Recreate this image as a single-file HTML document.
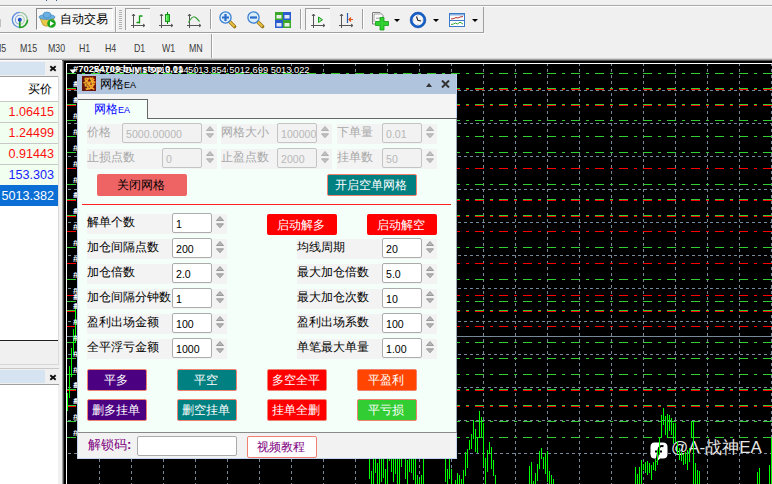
<!DOCTYPE html><html><head><meta charset="utf-8"><style>
*{margin:0;padding:0;box-sizing:content-box}
html,body{width:772px;height:484px;overflow:hidden;background:#f0f0f0;position:relative;font-family:"Liberation Sans",sans-serif}
.abs{position:absolute;white-space:nowrap}
.ct{font-size:11px;color:#fff;line-height:11px}
.ct3{font-size:9.5px;color:#fff;line-height:9px;font-weight:bold}
.ct2{font-size:9px;color:#fff;line-height:9px}
.tf{font-size:10.5px;color:#3c3c3c;line-height:12px;transform:scaleX(0.84);transform-origin:0 0}
.tb{font-size:12px;font-weight:500;color:#000;line-height:12px}
.mw{font-size:12px;line-height:14px}
.mwn{font-size:12.6px;line-height:14px}
.fa{font-size:13px;font-weight:bold;color:#f6b030;width:14px;text-align:center;line-height:15px}
.ttl{font-size:12px;color:#000;line-height:14px}
.tab{font-size:12px;color:#0000ff;line-height:14px}
.ea{font-size:9px}
.lbl{font-size:12px;line-height:16px}
.val{font-size:10px;line-height:12px;transform:scaleX(1.06);transform-origin:0 0}
.bt{font-size:12px}
.wm{font-size:17px;font-weight:500;color:#e6e6e6;line-height:18px;text-shadow:0 0 1px #000}
.wmi{display:inline-block;width:19px;height:19px;background:#fff;border-radius:5px;vertical-align:-3px;margin-right:4px}
</style></head><body><svg class="abs" style="left:0;top:0" width="772" height="484"><rect x="64" y="61" width="708" height="423" fill="#000"/><rect x="66" y="63" width="706" height="1" fill="#fff"/><rect x="66" y="63" width="1" height="421" fill="#fff"/><line x1="99.5" y1="64" x2="99.5" y2="484" stroke="#778899" stroke-width="1" stroke-dasharray="3 3" stroke-dashoffset="1"/><line x1="131.5" y1="64" x2="131.5" y2="484" stroke="#778899" stroke-width="1" stroke-dasharray="3 3" stroke-dashoffset="1"/><line x1="163.5" y1="64" x2="163.5" y2="484" stroke="#778899" stroke-width="1" stroke-dasharray="3 3" stroke-dashoffset="1"/><line x1="195.5" y1="64" x2="195.5" y2="484" stroke="#778899" stroke-width="1" stroke-dasharray="3 3" stroke-dashoffset="1"/><line x1="227.5" y1="64" x2="227.5" y2="484" stroke="#778899" stroke-width="1" stroke-dasharray="3 3" stroke-dashoffset="1"/><line x1="259.5" y1="64" x2="259.5" y2="484" stroke="#778899" stroke-width="1" stroke-dasharray="3 3" stroke-dashoffset="1"/><line x1="291.5" y1="64" x2="291.5" y2="484" stroke="#778899" stroke-width="1" stroke-dasharray="3 3" stroke-dashoffset="1"/><line x1="323.5" y1="64" x2="323.5" y2="484" stroke="#778899" stroke-width="1" stroke-dasharray="3 3" stroke-dashoffset="1"/><line x1="355.5" y1="64" x2="355.5" y2="484" stroke="#778899" stroke-width="1" stroke-dasharray="3 3" stroke-dashoffset="1"/><line x1="387.5" y1="64" x2="387.5" y2="484" stroke="#778899" stroke-width="1" stroke-dasharray="3 3" stroke-dashoffset="1"/><line x1="419.5" y1="64" x2="419.5" y2="484" stroke="#778899" stroke-width="1" stroke-dasharray="3 3" stroke-dashoffset="1"/><line x1="451.5" y1="64" x2="451.5" y2="484" stroke="#778899" stroke-width="1" stroke-dasharray="3 3" stroke-dashoffset="1"/><line x1="483.5" y1="64" x2="483.5" y2="484" stroke="#778899" stroke-width="1" stroke-dasharray="3 3" stroke-dashoffset="1"/><line x1="515.5" y1="64" x2="515.5" y2="484" stroke="#778899" stroke-width="1" stroke-dasharray="3 3" stroke-dashoffset="1"/><line x1="547.5" y1="64" x2="547.5" y2="484" stroke="#778899" stroke-width="1" stroke-dasharray="3 3" stroke-dashoffset="1"/><line x1="579.5" y1="64" x2="579.5" y2="484" stroke="#778899" stroke-width="1" stroke-dasharray="3 3" stroke-dashoffset="1"/><line x1="611.5" y1="64" x2="611.5" y2="484" stroke="#778899" stroke-width="1" stroke-dasharray="3 3" stroke-dashoffset="1"/><line x1="643.5" y1="64" x2="643.5" y2="484" stroke="#778899" stroke-width="1" stroke-dasharray="3 3" stroke-dashoffset="1"/><line x1="675.5" y1="64" x2="675.5" y2="484" stroke="#778899" stroke-width="1" stroke-dasharray="3 3" stroke-dashoffset="1"/><line x1="707.5" y1="64" x2="707.5" y2="484" stroke="#778899" stroke-width="1" stroke-dasharray="3 3" stroke-dashoffset="1"/><line x1="739.5" y1="64" x2="739.5" y2="484" stroke="#778899" stroke-width="1" stroke-dasharray="3 3" stroke-dashoffset="1"/><line x1="771.5" y1="64" x2="771.5" y2="484" stroke="#778899" stroke-width="1" stroke-dasharray="3 3" stroke-dashoffset="1"/><line x1="67" y1="90.5" x2="772" y2="90.5" stroke="#778899" stroke-width="1" stroke-dasharray="3 3" stroke-dashoffset="5"/><line x1="67" y1="123.5" x2="772" y2="123.5" stroke="#778899" stroke-width="1" stroke-dasharray="3 3" stroke-dashoffset="5"/><line x1="67" y1="156.5" x2="772" y2="156.5" stroke="#778899" stroke-width="1" stroke-dasharray="3 3" stroke-dashoffset="5"/><line x1="67" y1="189.5" x2="772" y2="189.5" stroke="#778899" stroke-width="1" stroke-dasharray="3 3" stroke-dashoffset="5"/><line x1="67" y1="222.5" x2="772" y2="222.5" stroke="#778899" stroke-width="1" stroke-dasharray="3 3" stroke-dashoffset="5"/><line x1="67" y1="255.5" x2="772" y2="255.5" stroke="#778899" stroke-width="1" stroke-dasharray="3 3" stroke-dashoffset="5"/><line x1="67" y1="288.5" x2="772" y2="288.5" stroke="#778899" stroke-width="1" stroke-dasharray="3 3" stroke-dashoffset="5"/><line x1="67" y1="321.5" x2="772" y2="321.5" stroke="#778899" stroke-width="1" stroke-dasharray="3 3" stroke-dashoffset="5"/><line x1="67" y1="354.5" x2="772" y2="354.5" stroke="#778899" stroke-width="1" stroke-dasharray="3 3" stroke-dashoffset="5"/><line x1="67" y1="387.5" x2="772" y2="387.5" stroke="#778899" stroke-width="1" stroke-dasharray="3 3" stroke-dashoffset="5"/><line x1="67" y1="420.5" x2="772" y2="420.5" stroke="#778899" stroke-width="1" stroke-dasharray="3 3" stroke-dashoffset="5"/><line x1="67" y1="453.5" x2="772" y2="453.5" stroke="#778899" stroke-width="1" stroke-dasharray="3 3" stroke-dashoffset="5"/><line x1="67" y1="73.5" x2="772" y2="73.5" stroke="#32cd32" stroke-width="1" stroke-dasharray="9 6 3 6"/><line x1="67" y1="88.5" x2="772" y2="88.5" stroke="#32cd32" stroke-width="1" stroke-dasharray="9 6 3 6"/><line x1="67" y1="89.5" x2="772" y2="89.5" stroke="#ff0000" stroke-width="1" stroke-dasharray="9 6 3 6"/><line x1="67" y1="104.5" x2="772" y2="104.5" stroke="#32cd32" stroke-width="1" stroke-dasharray="9 6 3 6"/><line x1="67" y1="105.5" x2="772" y2="105.5" stroke="#ff0000" stroke-width="1" stroke-dasharray="9 6 3 6"/><line x1="67" y1="120.5" x2="772" y2="120.5" stroke="#32cd32" stroke-width="1" stroke-dasharray="9 6 3 6"/><line x1="67" y1="136.5" x2="772" y2="136.5" stroke="#32cd32" stroke-width="1" stroke-dasharray="9 6 3 6"/><line x1="67" y1="152.5" x2="772" y2="152.5" stroke="#32cd32" stroke-width="1" stroke-dasharray="9 6 3 6"/><line x1="67" y1="168.5" x2="772" y2="168.5" stroke="#ff0000" stroke-width="1" stroke-dasharray="9 6 3 6"/><line x1="67" y1="184.5" x2="772" y2="184.5" stroke="#32cd32" stroke-width="1" stroke-dasharray="9 6 3 6"/><line x1="67" y1="199.5" x2="772" y2="199.5" stroke="#32cd32" stroke-width="1" stroke-dasharray="9 6 3 6"/><line x1="67" y1="200.5" x2="772" y2="200.5" stroke="#ff0000" stroke-width="1" stroke-dasharray="9 6 3 6"/><line x1="67" y1="215.5" x2="772" y2="215.5" stroke="#32cd32" stroke-width="1" stroke-dasharray="9 6 3 6"/><line x1="67" y1="216.5" x2="772" y2="216.5" stroke="#ff0000" stroke-width="1" stroke-dasharray="9 6 3 6"/><line x1="67" y1="231.5" x2="772" y2="231.5" stroke="#ff0000" stroke-width="1" stroke-dasharray="9 6 3 6"/><line x1="67" y1="247.5" x2="772" y2="247.5" stroke="#32cd32" stroke-width="1" stroke-dasharray="9 6 3 6"/><line x1="67" y1="263.5" x2="772" y2="263.5" stroke="#ff0000" stroke-width="1" stroke-dasharray="9 6 3 6"/><line x1="67" y1="279.5" x2="772" y2="279.5" stroke="#32cd32" stroke-width="1" stroke-dasharray="9 6 3 6"/><line x1="67" y1="295.5" x2="772" y2="295.5" stroke="#ff0000" stroke-width="1" stroke-dasharray="9 6 3 6"/><line x1="67" y1="301.5" x2="772" y2="301.5" stroke="#32cd32" stroke-width="1" stroke-dasharray="9 6 3 6"/><line x1="67" y1="310.5" x2="772" y2="310.5" stroke="#32cd32" stroke-width="1" stroke-dasharray="9 6 3 6"/><line x1="67" y1="311.5" x2="772" y2="311.5" stroke="#ff0000" stroke-width="1" stroke-dasharray="9 6 3 6"/><line x1="67" y1="326.5" x2="772" y2="326.5" stroke="#ff0000" stroke-width="1" stroke-dasharray="9 6 3 6"/><line x1="67" y1="342.5" x2="772" y2="342.5" stroke="#32cd32" stroke-width="1" stroke-dasharray="9 6 3 6"/><line x1="67" y1="358.5" x2="772" y2="358.5" stroke="#32cd32" stroke-width="1" stroke-dasharray="9 6 3 6"/><line x1="67" y1="374.5" x2="772" y2="374.5" stroke="#32cd32" stroke-width="1" stroke-dasharray="9 6 3 6"/><line x1="67" y1="389.5" x2="772" y2="389.5" stroke="#32cd32" stroke-width="1" stroke-dasharray="9 6 3 6"/><line x1="67" y1="390.5" x2="772" y2="390.5" stroke="#ff0000" stroke-width="1" stroke-dasharray="9 6 3 6"/><line x1="67" y1="405.5" x2="772" y2="405.5" stroke="#32cd32" stroke-width="1" stroke-dasharray="9 6 3 6"/><line x1="67" y1="406.5" x2="772" y2="406.5" stroke="#ff0000" stroke-width="1" stroke-dasharray="9 6 3 6"/><line x1="67" y1="421.5" x2="772" y2="421.5" stroke="#32cd32" stroke-width="1" stroke-dasharray="9 6 3 6"/><line x1="67" y1="437.5" x2="772" y2="437.5" stroke="#32cd32" stroke-width="1" stroke-dasharray="9 6 3 6"/><rect x="67" y="336" width="705" height="1" fill="#778899"/><polygon points="69.5,69.5 76.5,69.5 73,73.8" fill="#fff"/></svg>
<svg class="abs" style="left:650px;top:442px" width="19" height="21" viewBox="0 0 19 21">
<path d="M4.5 0.5 H13 Q17.5 0.5 17.5 5 V12 Q17.5 16.5 13 16.5 H10 L6.5 20 L6.5 16.5 H4.5 Q0.5 16.5 0.5 12 V5 Q0.5 0.5 4.5 0.5 Z" fill="#fff"/>
<path d="M13.5 4.3 Q10 3.3 9 6 L6.5 19 M5 9.5 H12" stroke="#000" stroke-width="2.1" fill="none"/></svg>
<div class="abs wm" style="left:671px;top:439px">@A-战神EA</div>
<svg class="abs" style="left:0;top:0" width="772" height="484"><rect x="67" y="393" width="1" height="18" fill="#00ff00"/><rect x="69" y="366" width="1" height="32" fill="#00ff00"/><rect x="71" y="348" width="1" height="29" fill="#00ff00"/><rect x="73" y="329" width="1" height="26" fill="#00ff00"/><rect x="75" y="307" width="1" height="36" fill="#00ff00"/><rect x="369" y="458" width="1" height="21" fill="#00ff00"/><rect x="371" y="471" width="1" height="13" fill="#00ff00"/><rect x="373" y="458" width="1" height="26" fill="#00ff00"/><rect x="375" y="458" width="1" height="15" fill="#00ff00"/><rect x="377" y="463" width="1" height="21" fill="#00ff00"/><rect x="379" y="458" width="1" height="26" fill="#00ff00"/><rect x="381" y="458" width="1" height="24" fill="#00ff00"/><rect x="383" y="458" width="1" height="20" fill="#00ff00"/><rect x="385" y="469" width="1" height="15" fill="#00ff00"/><rect x="387" y="458" width="1" height="26" fill="#00ff00"/><rect x="389" y="458" width="1" height="3" fill="#00ff00"/><rect x="391" y="458" width="1" height="14" fill="#00ff00"/><rect x="393" y="458" width="1" height="24" fill="#00ff00"/><rect x="395" y="458" width="1" height="16" fill="#00ff00"/><rect x="397" y="458" width="1" height="26" fill="#00ff00"/><rect x="399" y="458" width="1" height="26" fill="#00ff00"/><rect x="401" y="458" width="1" height="9" fill="#00ff00"/><rect x="405" y="458" width="1" height="21" fill="#00ff00"/><rect x="407" y="460" width="1" height="24" fill="#00ff00"/><rect x="409" y="458" width="1" height="14" fill="#00ff00"/><rect x="411" y="458" width="1" height="15" fill="#00ff00"/><rect x="413" y="458" width="1" height="22" fill="#00ff00"/><rect x="415" y="458" width="1" height="26" fill="#00ff00"/><rect x="417" y="475" width="1" height="9" fill="#00ff00"/><rect x="419" y="479" width="1" height="5" fill="#00ff00"/><rect x="421" y="475" width="1" height="9" fill="#00ff00"/><rect x="423" y="458" width="1" height="26" fill="#00ff00"/><rect x="445" y="458" width="1" height="24" fill="#00ff00"/><rect x="447" y="469" width="1" height="15" fill="#00ff00"/><rect x="449" y="458" width="1" height="21" fill="#00ff00"/><rect x="451" y="469" width="1" height="15" fill="#00ff00"/><rect x="455" y="480" width="1" height="4" fill="#00ff00"/><rect x="457" y="473" width="1" height="11" fill="#00ff00"/><rect x="459" y="475" width="1" height="9" fill="#00ff00"/><rect x="461" y="479" width="1" height="5" fill="#00ff00"/><rect x="463" y="470" width="1" height="14" fill="#00ff00"/><rect x="465" y="452" width="1" height="24" fill="#00ff00"/><rect x="467" y="449" width="1" height="19" fill="#00ff00"/><rect x="469" y="440" width="1" height="10" fill="#00ff00"/><rect x="471" y="434" width="1" height="15" fill="#00ff00"/><rect x="473" y="420" width="1" height="19" fill="#00ff00"/><rect x="475" y="429" width="1" height="23" fill="#00ff00"/><rect x="477" y="437" width="1" height="16" fill="#00ff00"/><rect x="479" y="411" width="1" height="27" fill="#00ff00"/><rect x="481" y="417" width="1" height="20" fill="#00ff00"/><rect x="483" y="423" width="1" height="44" fill="#00ff00"/><rect x="485" y="458" width="1" height="26" fill="#00ff00"/><rect x="487" y="450" width="1" height="22" fill="#00ff00"/><rect x="489" y="442" width="1" height="12" fill="#00ff00"/><rect x="491" y="447" width="1" height="22" fill="#00ff00"/><rect x="493" y="460" width="1" height="16" fill="#00ff00"/><rect x="495" y="475" width="1" height="9" fill="#00ff00"/><rect x="529" y="466" width="1" height="18" fill="#00ff00"/><rect x="531" y="462" width="1" height="22" fill="#00ff00"/><rect x="533" y="481" width="1" height="3" fill="#00ff00"/><rect x="535" y="473" width="1" height="11" fill="#00ff00"/><rect x="537" y="464" width="1" height="17" fill="#00ff00"/><rect x="539" y="451" width="1" height="18" fill="#00ff00"/><rect x="541" y="448" width="1" height="11" fill="#00ff00"/><rect x="543" y="457" width="1" height="12" fill="#00ff00"/><rect x="545" y="453" width="1" height="21" fill="#00ff00"/><rect x="547" y="451" width="1" height="31" fill="#00ff00"/><rect x="549" y="471" width="1" height="13" fill="#00ff00"/><rect x="551" y="475" width="1" height="9" fill="#00ff00"/><rect x="553" y="479" width="1" height="5" fill="#00ff00"/><rect x="635" y="467" width="1" height="17" fill="#00ff00"/><rect x="637" y="474" width="1" height="10" fill="#00ff00"/><rect x="639" y="467" width="1" height="17" fill="#00ff00"/><rect x="641" y="460" width="1" height="24" fill="#00ff00"/><rect x="643" y="464" width="1" height="6" fill="#00ff00"/><rect x="645" y="462" width="1" height="11" fill="#00ff00"/><rect x="647" y="461" width="1" height="14" fill="#00ff00"/><rect x="649" y="463" width="1" height="10" fill="#00ff00"/><rect x="651" y="465" width="1" height="15" fill="#00ff00"/><rect x="653" y="462" width="1" height="8" fill="#00ff00"/><rect x="655" y="459" width="1" height="12" fill="#00ff00"/><rect x="657" y="450" width="1" height="15" fill="#00ff00"/><rect x="659" y="438" width="1" height="17" fill="#00ff00"/><rect x="661" y="415" width="1" height="23" fill="#00ff00"/><rect x="663" y="408" width="1" height="17" fill="#00ff00"/><rect x="665" y="416" width="1" height="19" fill="#00ff00"/><rect x="667" y="414" width="1" height="24" fill="#00ff00"/><rect x="669" y="415" width="1" height="16" fill="#00ff00"/><rect x="671" y="418" width="1" height="17" fill="#00ff00"/><rect x="673" y="423" width="1" height="21" fill="#00ff00"/><rect x="675" y="423" width="1" height="19" fill="#00ff00"/><rect x="677" y="441" width="1" height="13" fill="#00ff00"/><rect x="679" y="448" width="1" height="12" fill="#00ff00"/><rect x="681" y="452" width="1" height="9" fill="#00ff00"/><rect x="683" y="454" width="1" height="11" fill="#00ff00"/><rect x="685" y="452" width="1" height="12" fill="#00ff00"/><rect x="687" y="450" width="1" height="20" fill="#00ff00"/><rect x="689" y="448" width="1" height="14" fill="#00ff00"/><rect x="691" y="421" width="1" height="17" fill="#00ff00"/><rect x="693" y="421" width="1" height="63" fill="#00ff00"/><rect x="695" y="463" width="1" height="21" fill="#00ff00"/><rect x="697" y="470" width="1" height="14" fill="#00ff00"/><rect x="699" y="471" width="1" height="13" fill="#00ff00"/><rect x="757" y="472" width="1" height="12" fill="#00ff00"/><rect x="759" y="468" width="1" height="16" fill="#00ff00"/><rect x="769" y="465" width="1" height="19" fill="#00ff00"/><rect x="771" y="438" width="1" height="46" fill="#00ff00"/></svg>
<div class="abs ct" style="left:73px;top:63px;font-size:9.6px;font-weight:bold;transform:scaleX(0.985);transform-origin:0 0">#70254709 buy stop 0.01</div>
<div class="abs ct2" style="left:93px;top:66px;font-size:9.3px">XAUUSD,M1 5013.194</div>
<div class="abs ct2" style="left:188px;top:66px;font-size:9.3px">5013.854 5012.699 5013.022</div>
<div class="abs ct3" style="left:73px;top:79px">#7</div>
<div class="abs ct3" style="left:74px;top:79px">#7</div>
<div class="abs ct3" style="left:73px;top:95px">#7</div>
<div class="abs ct3" style="left:74px;top:95px">#7</div>
<div class="abs ct3" style="left:73px;top:111px">#7</div>
<div class="abs ct3" style="left:73px;top:127px">#7</div>
<div class="abs ct3" style="left:73px;top:143px">#7</div>
<div class="abs ct3" style="left:73px;top:159px">#7</div>
<div class="abs ct3" style="left:73px;top:175px">#7</div>
<div class="abs ct3" style="left:73px;top:190px">#7</div>
<div class="abs ct3" style="left:74px;top:190px">#7</div>
<div class="abs ct3" style="left:73px;top:206px">#7</div>
<div class="abs ct3" style="left:74px;top:206px">#7</div>
<div class="abs ct3" style="left:73px;top:222px">#7</div>
<div class="abs ct3" style="left:73px;top:238px">#7</div>
<div class="abs ct3" style="left:73px;top:254px">#7</div>
<div class="abs ct3" style="left:73px;top:270px">#7</div>
<div class="abs ct3" style="left:73px;top:286px">#7</div>
<div class="abs ct3" style="left:73px;top:292px">#7</div>
<div class="abs ct3" style="left:74px;top:292px">#7</div>
<div class="abs ct3" style="left:73px;top:301px">#7</div>
<div class="abs ct3" style="left:74px;top:301px">#7</div>
<div class="abs ct3" style="left:73px;top:317px">#7</div>
<div class="abs ct3" style="left:73px;top:333px">#7</div>
<div class="abs ct3" style="left:73px;top:349px">#7</div>
<div class="abs ct3" style="left:73px;top:365px">#7</div>
<div class="abs ct3" style="left:73px;top:380px">#7</div>
<div class="abs ct3" style="left:74px;top:380px">#7</div>
<div class="abs ct3" style="left:73px;top:396px">#7</div>
<div class="abs ct3" style="left:74px;top:396px">#7</div>
<div class="abs ct3" style="left:73px;top:412px">#7</div>
<div class="abs ct3" style="left:73px;top:428px">#7</div>
<div class="abs" style="left:46px;top:0;width:1px;height:1px;background:#3a5a90"></div>
<div class="abs" style="left:56px;top:0;width:1px;height:1px;background:#3a5a90"></div>
<div class="abs" style="left:0;top:5px;width:772px;height:1px;background:#a9a9a9"></div>
<div class="abs" style="left:0;top:6px;width:772px;height:1px;background:#fff"></div>
<div class="abs" style="left:0;top:32px;width:484px;height:1px;background:#a0a0a0"></div>
<div class="abs" style="left:483px;top:7px;width:1px;height:26px;background:#a0a0a0"></div>
<div class="abs" style="left:0;top:33px;width:485px;height:1px;background:#fff"></div>
<div class="abs" style="left:0;top:58px;width:772px;height:1px;background:#d4d4d4"></div>
<div class="abs" style="left:0;top:59px;width:772px;height:1px;background:#a0a0a0"></div>
<div class="abs" style="left:0;top:60px;width:62px;height:1px;background:#fafafa"></div>
<div class="abs" style="left:62px;top:60px;width:710px;height:1px;background:#505050"></div>
<div class="abs" style="left:211px;top:34px;width:1px;height:24px;background:#a0a0a0"></div>
<div class="abs" style="left:212px;top:34px;width:1px;height:24px;background:#fff"></div>
<div class="abs tf" style="left:-6px;top:42px">M5</div>
<div class="abs tf" style="left:20px;top:42px">M15</div>
<div class="abs tf" style="left:48px;top:42px">M30</div>
<div class="abs tf" style="left:79px;top:42px">H1</div>
<div class="abs tf" style="left:105px;top:42px">H4</div>
<div class="abs tf" style="left:134px;top:42px">D1</div>
<div class="abs tf" style="left:162px;top:42px">W1</div>
<div class="abs tf" style="left:189px;top:42px">MN</div>
<svg class="abs" style="left:10px;top:10px" width="20" height="20" viewBox="0 0 20 20">
<path d="M9.8 17.3 A7.5 7.5 0 0 1 9.8 2.3" fill="none" stroke="#5b8ee0" stroke-width="1.3"/>
<path d="M9.8 2.3 A7.5 7.5 0 0 1 17.3 9.8" fill="none" stroke="#9cc4a4" stroke-width="1.3"/>
<path d="M9.8 14.3 A4.5 4.5 0 0 1 9.8 5.3" fill="none" stroke="#7aa4e4" stroke-width="1.1"/>
<path d="M9.8 5.3 A4.5 4.5 0 0 1 14.3 9.8 A4.5 4.5 0 0 1 9.8 14.3" fill="none" stroke="#a8d0b0" stroke-width="1.1"/>
<path d="M9.8 10 L9.8 17.5 A7.7 7.7 0 0 0 17.5 9.8" fill="none" stroke="#22a022" stroke-width="1.7"/>
<circle cx="9.8" cy="9.8" r="2" fill="#1f50c8"/>
</svg>
<div class="abs" style="left:0;top:19px;width:1px;height:8px;background:#c0c0c0"></div>
<div class="abs" style="left:36px;top:8px;width:75px;height:20px;border:1px solid;border-color:#8a8a8a #fff #fff #8a8a8a;background:#f7f7f7"></div>
<svg class="abs" style="left:38px;top:11px" width="19" height="17" viewBox="0 0 19 17">
<path d="M2 7 L16 7 L15 12 Q10 17 5 14 Z" fill="#e8c84a" stroke="#b8962a" stroke-width="0.8"/>
<ellipse cx="9" cy="6" rx="8" ry="2.5" fill="#6ab0e0" stroke="#3a80c0" stroke-width="0.6"/>
<ellipse cx="9" cy="4" rx="4" ry="3" fill="#6ab0e0" stroke="#3a80c0" stroke-width="0.6"/>
<circle cx="13.5" cy="12.5" r="4.3" fill="#1fa51f"/>
<polygon points="12,10 12,15 16,12.5" fill="#fff"/>
</svg>
<div class="abs tb" style="left:60px;top:12.5px">自动交易</div>
<div class="abs" style="left:115px;top:7px;width:1px;height:25px;background:#a8a8a8"></div>
<div class="abs" style="left:116px;top:7px;width:1px;height:25px;background:#fafafa"></div>
<div class="abs" style="left:119px;top:10px;width:3px;height:19px;background:repeating-linear-gradient(#b0b0b0 0 1px,#f4f4f4 1px 2px)"></div>
<div class="abs" style="left:125px;top:8px;width:24px;height:21px;border-top:1px solid #a0a0a0;border-left:1px solid #a0a0a0;background:#f6f6f6"></div>
<div class="abs" style="left:305px;top:8px;width:24px;height:21px;border-top:1px solid #a0a0a0;border-left:1px solid #a0a0a0;background:#f6f6f6"></div>
<svg class="abs" style="left:130px;top:12px" width="18" height="17" viewBox="0 0 18 17">
<path d="M3.5 2 L3.5 16 M1 13.5 L15 13.5" stroke="#555" stroke-width="1" fill="none"/>
<path d="M2 4 L3.5 2 L5 4 M13 12 L15 13.5 L13 15" stroke="#555" stroke-width="1" fill="none"/><path d="M9.5 3.5 V11.5 M9.5 4 H12.5 M6.5 10.5 H9.5" stroke="#169a16" stroke-width="1.3" fill="none"/></svg>
<svg class="abs" style="left:158px;top:12px" width="18" height="17" viewBox="0 0 18 17">
<path d="M3.5 2 L3.5 16 M1 13.5 L15 13.5" stroke="#555" stroke-width="1" fill="none"/>
<path d="M2 4 L3.5 2 L5 4 M13 12 L15 13.5 L13 15" stroke="#555" stroke-width="1" fill="none"/><path d="M9.5 0 V12" stroke="#128a12" stroke-width="1"/><rect x="7.5" y="2.5" width="4" height="7" fill="#3ee03e" stroke="#128a12" stroke-width="0.9"/><path d="M8.6 3.5 V8.5" stroke="#b8ffb8" stroke-width="0.8"/></svg>
<svg class="abs" style="left:186px;top:12px" width="18" height="17" viewBox="0 0 18 17">
<path d="M3.5 2 L3.5 16 M1 13.5 L15 13.5" stroke="#555" stroke-width="1" fill="none"/>
<path d="M2 4 L3.5 2 L5 4 M13 12 L15 13.5 L13 15" stroke="#555" stroke-width="1" fill="none"/><path d="M2.5 10.5 C5 6 7 4.5 8.5 4.8 C10.5 5 12 8 13.5 9.5" stroke="#2a9a2a" stroke-width="1.2" fill="none"/></svg>
<div class="abs" style="left:210px;top:9px;width:1px;height:20px;background:#a0a0a0"></div>
<div class="abs" style="left:211px;top:9px;width:1px;height:20px;background:#fff"></div>
<svg class="abs" style="left:219px;top:11px" width="18" height="18" viewBox="0 0 18 18">
<path d="M10.5 10.5 L15.5 15.5" stroke="#9a7418" stroke-width="3.6" stroke-linecap="round"/>
<path d="M10.5 10.5 L15.5 15.5" stroke="#e8c040" stroke-width="2"/>
<circle cx="6.5" cy="6.5" r="5.6" fill="#d8ecfa" stroke="#3a80d0" stroke-width="1.3"/><path d="M3 6.5 L10 6.5 M6.5 3 L6.5 10" stroke="#2a6cc8" stroke-width="2.2"/></svg>
<svg class="abs" style="left:247px;top:11px" width="18" height="18" viewBox="0 0 18 18">
<path d="M10.5 10.5 L15.5 15.5" stroke="#9a7418" stroke-width="3.6" stroke-linecap="round"/>
<path d="M10.5 10.5 L15.5 15.5" stroke="#e8c040" stroke-width="2"/>
<circle cx="6.5" cy="6.5" r="5.6" fill="#d8ecfa" stroke="#3a80d0" stroke-width="1.3"/><path d="M3 6.5 L10 6.5" stroke="#2a6cc8" stroke-width="2.2"/></svg>
<svg class="abs" style="left:275px;top:12px" width="16" height="16" viewBox="0 0 16 16">
<rect x="0" y="0" width="8" height="8" fill="#3aa82a"/><rect x="8" y="0" width="8" height="8" fill="#2a5cd0"/>
<rect x="0" y="8" width="8" height="8" fill="#2a5cd0"/><rect x="8" y="8" width="8" height="8" fill="#3aa82a"/>
<rect x="1.5" y="3" width="5" height="3.5" fill="#e8f0e8"/><rect x="9.5" y="3" width="5" height="3.5" fill="#e0e8f8"/>
<rect x="1.5" y="11" width="5" height="3.5" fill="#e0e8f8"/><rect x="9.5" y="11" width="5" height="3.5" fill="#e8f0e8"/>
</svg>
<div class="abs" style="left:300px;top:9px;width:1px;height:20px;background:#a0a0a0"></div>
<div class="abs" style="left:301px;top:9px;width:1px;height:20px;background:#fff"></div>
<svg class="abs" style="left:310px;top:12px" width="18" height="17" viewBox="0 0 18 17">
<path d="M3.5 2 L3.5 16 M1 13.5 L15 13.5" stroke="#555" stroke-width="1" fill="none"/>
<path d="M2 4 L3.5 2 L5 4 M13 12 L15 13.5 L13 15" stroke="#555" stroke-width="1" fill="none"/><polygon points="8.5,5 8.5,10.5 12.5,7.75" fill="#9ee09e" stroke="#18a018" stroke-width="1"/></svg>
<svg class="abs" style="left:338px;top:12px" width="18" height="17" viewBox="0 0 18 17">
<path d="M3.5 2 L3.5 16 M1 13.5 L15 13.5" stroke="#555" stroke-width="1" fill="none"/>
<path d="M2 4 L3.5 2 L5 4 M13 12 L15 13.5 L13 15" stroke="#555" stroke-width="1" fill="none"/><path d="M9.5 1 L9.5 11" stroke="#2a60b0" stroke-width="1.2"/><path d="M15 7.5 L11 7.5 M13 5.5 L11 7.5 L13 9.5" stroke="#e05010" stroke-width="1.2" fill="none"/></svg>
<div class="abs" style="left:362px;top:9px;width:1px;height:20px;background:#a0a0a0"></div>
<div class="abs" style="left:363px;top:9px;width:1px;height:20px;background:#fff"></div>
<svg class="abs" style="left:371px;top:12px" width="19" height="19" viewBox="0 0 19 19">
<path d="M1.5 0.5 L9 0.5 L12 3.5 L12 12 L1.5 12 Z" fill="#fafafa" stroke="#808080" stroke-width="1"/>
<path d="M5 5.5 L12 5.5 L12 7 L5 7 Z" fill="#bbb"/>
<path d="M3 3 L3 2 L9.5 2 M3 3 V10" stroke="#909090" stroke-width="0.8" fill="none"/>
<path d="M9 5.5 H13 V9.5 H17.5 V13.5 H13 V18 H9 V13.5 H4.5 V9.5 H9 Z" fill="#30d030" stroke="#12a012" stroke-width="0.8"/>
</svg>
<div class="abs" style="left:394px;top:19px;width:0;height:0;border-left:3px solid transparent;border-right:3px solid transparent;border-top:3px solid #000"></div>
<div class="abs" style="left:433px;top:19px;width:0;height:0;border-left:3px solid transparent;border-right:3px solid transparent;border-top:3px solid #000"></div>
<div class="abs" style="left:472px;top:19px;width:0;height:0;border-left:3px solid transparent;border-right:3px solid transparent;border-top:3px solid #000"></div>
<svg class="abs" style="left:409px;top:11px" width="18" height="18" viewBox="0 0 18 18">
<circle cx="9" cy="9" r="6.7" fill="#f6f6f6" stroke="#1560c8" stroke-width="2.5"/>
<circle cx="9" cy="9" r="7.9" fill="none" stroke="#0a3f98" stroke-width="0.5"/>
<path d="M9 3.8 V4.8 M9 13.2 V14.2 M3.8 9 H4.8 M13.2 9 H14.2" stroke="#999" stroke-width="0.8"/>
<path d="M7.5 5.5 L8.8 9.2 L12 10" stroke="#222" stroke-width="1.1" fill="none"/></svg>
<svg class="abs" style="left:449px;top:13px" width="17" height="14" viewBox="0 0 17 14">
<rect x="0.5" y="0.5" width="15" height="13" fill="#fafcff" stroke="#3a78c8" stroke-width="1"/>
<rect x="1" y="1" width="14" height="1.5" fill="#8ab0e0"/><path d="M1 7.5 L15 7.5" stroke="#3a78c8" stroke-width="1"/>
<path d="M2 6 L5 5.5 L7 4.5 L9 5 L11 4 L14 3.5" stroke="#b02020" stroke-width="0.9" fill="none"/>
<path d="M2 11.5 L4.5 11 L6.5 10 L8.5 11 L11 9.2 L14 11" stroke="#20a020" stroke-width="0.9" fill="none"/></svg>
<div class="abs" style="left:0;top:61px;width:64px;height:423px;background:#f0f0f0"></div>
<div class="abs" style="left:62px;top:61px;width:1px;height:423px;background:#a0a0a0"></div>
<div class="abs" style="left:63px;top:61px;width:1px;height:423px;background:#4a4a4a"></div>
<div class="abs" style="left:0;top:62px;width:45px;height:13px;background:#d6e3f0"></div>
<svg class="abs" style="left:49px;top:65px" width="8" height="7" viewBox="0 0 8 7"><path d="M1.3 1.3 L6.7 5.7 M6.7 1.3 L1.3 5.7" stroke="#111" stroke-width="1.9"/></svg>
<div class="abs" style="left:0;top:76px;width:59px;height:1px;background:#a0a0a0"></div>
<div class="abs" style="left:0;top:77px;width:58px;height:263px;background:#fff"></div>
<div class="abs" style="left:58px;top:76px;width:1px;height:288px;background:#dcdcdc"></div>
<div class="abs mw" style="right:720px;top:82px;color:#000">买价</div>
<div class="abs" style="left:0;top:101px;width:58px;height:21px;background:#f0fff0"></div>
<div class="abs" style="left:0;top:101px;width:58px;height:1px;background:#c8c8c8"></div>
<div class="abs mwn" style="right:718px;top:105px;color:#ff1010">1.06415</div>
<div class="abs" style="left:0;top:122px;width:58px;height:21px;background:#f0fff0"></div>
<div class="abs" style="left:0;top:122px;width:58px;height:1px;background:#c8c8c8"></div>
<div class="abs mwn" style="right:718px;top:126px;color:#ff1010">1.24499</div>
<div class="abs" style="left:0;top:143px;width:58px;height:21px;background:#f0fff0"></div>
<div class="abs" style="left:0;top:143px;width:58px;height:1px;background:#c8c8c8"></div>
<div class="abs mwn" style="right:718px;top:147px;color:#ff1010">0.91443</div>
<div class="abs" style="left:0;top:164px;width:58px;height:21px;background:#f0fff0"></div>
<div class="abs" style="left:0;top:164px;width:58px;height:1px;background:#c8c8c8"></div>
<div class="abs mwn" style="right:718px;top:168px;color:#2020ff">153.303</div>
<div class="abs" style="left:0;top:185px;width:58px;height:21px;background:#0a6ed4"></div>
<div class="abs mwn" style="right:718px;top:189px;color:#fff">5013.382</div>
<div class="abs" style="left:0;top:340px;width:58px;height:1px;background:#202020"></div>
<div class="abs" style="left:0;top:341px;width:58px;height:23px;background:#f0f0f0"></div>
<div class="abs" style="left:0;top:364px;width:59px;height:1px;background:#d8d8d8"></div>
<div class="abs" style="left:0;top:368px;width:59px;height:1px;background:#c8c8c8"></div>
<div class="abs" style="left:0;top:370px;width:45px;height:13px;background:#d6e3f0"></div>
<svg class="abs" style="left:49px;top:374px" width="8" height="7" viewBox="0 0 8 7"><path d="M1.3 1.3 L6.7 5.7 M6.7 1.3 L1.3 5.7" stroke="#111" stroke-width="1.9"/></svg>
<div class="abs" style="left:0;top:384px;width:59px;height:1px;background:#a0a0a0"></div>
<div class="abs" style="left:0;top:385px;width:58px;height:99px;background:#fff"></div>
<div class="abs" style="left:77px;top:74px;width:380px;height:385px;background:#f5fffa;box-shadow:none"></div>
<div class="abs" style="left:77px;top:74px;width:380px;height:20px;background:#b0c4de"></div>
<div class="abs" style="left:456px;top:74px;width:1px;height:44px;background:#b8d0ee"></div>
<div class="abs" style="left:456px;top:118px;width:1px;height:315px;background:#9aa4b0"></div>
<div class="abs" style="left:456px;top:433px;width:1px;height:26px;background:#c0d2ec"></div>
<div class="abs" style="left:82px;top:76px;width:14px;height:15px;background:#6a140e"></div>
<div class="abs fa" style="left:82px;top:76px">發</div>
<div class="abs ttl" style="left:100px;top:77px">网格<span class="ea">EA</span></div>
<div class="abs" style="left:426px;top:83px;width:0;height:0;border-left:3.5px solid transparent;border-right:3.5px solid transparent;border-bottom:4px solid #333"></div>
<svg class="abs" style="left:441px;top:80px" width="9" height="8" viewBox="0 0 9 8"><path d="M1 0.5 L8 7.5 M8 0.5 L1 7.5" stroke="#333" stroke-width="2"/></svg>
<div class="abs" style="left:77px;top:94px;width:379px;height:24px;background:#f4f4f4"></div>
<div class="abs" style="left:77px;top:99px;width:70px;height:19px;background:#f5fffa;border-top:1px solid #666;border-right:1px solid #666"></div>
<div class="abs" style="left:147px;top:118px;width:310px;height:1px;background:#666"></div>
<div class="abs tab" style="left:94px;top:102px">网格<span class="ea">EA</span></div>
<div class="abs" style="left:87px;top:124px;width:130px;height:20px;background:#f3f3f3"></div>
<div class="abs lbl" style="left:87px;top:124px;color:#a8a8a8">价格</div>
<div class="abs" style="left:122px;top:123px;width:78px;height:18px;border:1px solid #c4c4c4;border-radius:2px;background:#f2f2f2"></div>
<div class="abs val" style="left:126px;top:128.5px;color:#b8b8b8;width:73px;overflow:hidden">5000.00000</div>
<svg class="abs" style="left:206px;top:123px" width="8" height="17" viewBox="0 0 8 17"><path d="M0.5 7.5 L4 3.5 L7.5 7.5 Z M0.5 10.8 L7.5 10.8 L4 14.8 Z" fill="#c0c0c0" stroke="#a4a4a4" stroke-width="0.8" stroke-linejoin="round"/></svg>
<div class="abs" style="left:221px;top:124px;width:111px;height:20px;background:#f3f3f3"></div>
<div class="abs lbl" style="left:221px;top:124px;color:#a8a8a8">网格大小</div>
<div class="abs" style="left:277px;top:123px;width:38px;height:18px;border:1px solid #c4c4c4;border-radius:2px;background:#f2f2f2"></div>
<div class="abs val" style="left:281px;top:128.5px;color:#b8b8b8;width:33px;overflow:hidden">100000</div>
<svg class="abs" style="left:321px;top:123px" width="8" height="17" viewBox="0 0 8 17"><path d="M0.5 7.5 L4 3.5 L7.5 7.5 Z M0.5 10.8 L7.5 10.8 L4 14.8 Z" fill="#c0c0c0" stroke="#a4a4a4" stroke-width="0.8" stroke-linejoin="round"/></svg>
<div class="abs" style="left:337px;top:124px;width:100px;height:20px;background:#f3f3f3"></div>
<div class="abs lbl" style="left:337px;top:124px;color:#a8a8a8">下单量</div>
<div class="abs" style="left:382px;top:123px;width:38px;height:18px;border:1px solid #c4c4c4;border-radius:2px;background:#f2f2f2"></div>
<div class="abs val" style="left:386px;top:128.5px;color:#b8b8b8;width:33px;overflow:hidden">0.01</div>
<svg class="abs" style="left:426px;top:123px" width="8" height="17" viewBox="0 0 8 17"><path d="M0.5 7.5 L4 3.5 L7.5 7.5 Z M0.5 10.8 L7.5 10.8 L4 14.8 Z" fill="#c0c0c0" stroke="#a4a4a4" stroke-width="0.8" stroke-linejoin="round"/></svg>
<div class="abs" style="left:87px;top:149px;width:130px;height:20px;background:#f3f3f3"></div>
<div class="abs lbl" style="left:87px;top:149px;color:#a8a8a8">止损点数</div>
<div class="abs" style="left:162px;top:148px;width:38px;height:18px;border:1px solid #c4c4c4;border-radius:2px;background:#f2f2f2"></div>
<div class="abs val" style="left:166px;top:153.5px;color:#b8b8b8;width:33px;overflow:hidden">0</div>
<svg class="abs" style="left:206px;top:148px" width="8" height="17" viewBox="0 0 8 17"><path d="M0.5 7.5 L4 3.5 L7.5 7.5 Z M0.5 10.8 L7.5 10.8 L4 14.8 Z" fill="#c0c0c0" stroke="#a4a4a4" stroke-width="0.8" stroke-linejoin="round"/></svg>
<div class="abs" style="left:221px;top:149px;width:111px;height:20px;background:#f3f3f3"></div>
<div class="abs lbl" style="left:221px;top:149px;color:#a8a8a8">止盈点数</div>
<div class="abs" style="left:277px;top:148px;width:38px;height:18px;border:1px solid #c4c4c4;border-radius:2px;background:#f2f2f2"></div>
<div class="abs val" style="left:281px;top:153.5px;color:#b8b8b8;width:33px;overflow:hidden">2000</div>
<svg class="abs" style="left:321px;top:148px" width="8" height="17" viewBox="0 0 8 17"><path d="M0.5 7.5 L4 3.5 L7.5 7.5 Z M0.5 10.8 L7.5 10.8 L4 14.8 Z" fill="#c0c0c0" stroke="#a4a4a4" stroke-width="0.8" stroke-linejoin="round"/></svg>
<div class="abs" style="left:337px;top:149px;width:100px;height:20px;background:#f3f3f3"></div>
<div class="abs lbl" style="left:337px;top:149px;color:#a8a8a8">挂单数</div>
<div class="abs" style="left:382px;top:148px;width:38px;height:18px;border:1px solid #c4c4c4;border-radius:2px;background:#f2f2f2"></div>
<div class="abs val" style="left:386px;top:153.5px;color:#b8b8b8;width:33px;overflow:hidden">50</div>
<svg class="abs" style="left:426px;top:148px" width="8" height="17" viewBox="0 0 8 17"><path d="M0.5 7.5 L4 3.5 L7.5 7.5 Z M0.5 10.8 L7.5 10.8 L4 14.8 Z" fill="#c0c0c0" stroke="#a4a4a4" stroke-width="0.8" stroke-linejoin="round"/></svg>
<div class="abs bt" style="left:97px;top:174px;box-sizing:border-box;width:90px;height:22px;background:#ee6464;color:#000;border-radius:2px;text-align:center;padding-right:2px;padding-top:1px;line-height:21px">关闭网格</div>
<div class="abs bt" style="left:327px;top:174px;box-sizing:border-box;width:90px;height:22px;background:#008080;color:#fff;border:1px solid #f08070;border-radius:2px;text-align:center;padding-right:2px;padding-top:1px;line-height:19px">开启空单网格</div>
<div class="abs" style="left:82px;top:204px;width:369px;height:1px;background:#ff2020"></div>
<div class="abs" style="left:87px;top:214px;width:140px;height:20px;background:#f3f3f3"></div>
<div class="abs lbl" style="left:87px;top:214px;color:#000">解单个数</div>
<div class="abs" style="left:172px;top:213px;width:38px;height:18px;border:1px solid #acacac;border-radius:2px;background:#fff"></div>
<div class="abs val" style="left:176px;top:218.5px;color:#000;width:33px;overflow:hidden">1</div>
<svg class="abs" style="left:216px;top:213px" width="8" height="17" viewBox="0 0 8 17"><path d="M0.5 7.5 L4 3.5 L7.5 7.5 Z M0.5 10.8 L7.5 10.8 L4 14.8 Z" fill="#b4b4b4" stroke="#8c8c8c" stroke-width="0.8" stroke-linejoin="round"/></svg>
<div class="abs" style="left:87px;top:239px;width:140px;height:20px;background:#f3f3f3"></div>
<div class="abs lbl" style="left:87px;top:239px;color:#000">加仓间隔点数</div>
<div class="abs" style="left:172px;top:238px;width:38px;height:18px;border:1px solid #acacac;border-radius:2px;background:#fff"></div>
<div class="abs val" style="left:176px;top:243.5px;color:#000;width:33px;overflow:hidden">200</div>
<svg class="abs" style="left:216px;top:238px" width="8" height="17" viewBox="0 0 8 17"><path d="M0.5 7.5 L4 3.5 L7.5 7.5 Z M0.5 10.8 L7.5 10.8 L4 14.8 Z" fill="#b4b4b4" stroke="#8c8c8c" stroke-width="0.8" stroke-linejoin="round"/></svg>
<div class="abs" style="left:87px;top:264px;width:140px;height:20px;background:#f3f3f3"></div>
<div class="abs lbl" style="left:87px;top:264px;color:#000">加仓倍数</div>
<div class="abs" style="left:172px;top:263px;width:38px;height:18px;border:1px solid #acacac;border-radius:2px;background:#fff"></div>
<div class="abs val" style="left:176px;top:268.5px;color:#000;width:33px;overflow:hidden">2.0</div>
<svg class="abs" style="left:216px;top:263px" width="8" height="17" viewBox="0 0 8 17"><path d="M0.5 7.5 L4 3.5 L7.5 7.5 Z M0.5 10.8 L7.5 10.8 L4 14.8 Z" fill="#b4b4b4" stroke="#8c8c8c" stroke-width="0.8" stroke-linejoin="round"/></svg>
<div class="abs" style="left:87px;top:289px;width:140px;height:20px;background:#f3f3f3"></div>
<div class="abs lbl" style="left:87px;top:289px;color:#000">加仓间隔分钟数</div>
<div class="abs" style="left:172px;top:288px;width:38px;height:18px;border:1px solid #acacac;border-radius:2px;background:#fff"></div>
<div class="abs val" style="left:176px;top:293.5px;color:#000;width:33px;overflow:hidden">1</div>
<svg class="abs" style="left:216px;top:288px" width="8" height="17" viewBox="0 0 8 17"><path d="M0.5 7.5 L4 3.5 L7.5 7.5 Z M0.5 10.8 L7.5 10.8 L4 14.8 Z" fill="#b4b4b4" stroke="#8c8c8c" stroke-width="0.8" stroke-linejoin="round"/></svg>
<div class="abs" style="left:87px;top:314px;width:140px;height:20px;background:#f3f3f3"></div>
<div class="abs lbl" style="left:87px;top:314px;color:#000">盈利出场金额</div>
<div class="abs" style="left:172px;top:313px;width:38px;height:18px;border:1px solid #acacac;border-radius:2px;background:#fff"></div>
<div class="abs val" style="left:176px;top:318.5px;color:#000;width:33px;overflow:hidden">100</div>
<svg class="abs" style="left:216px;top:313px" width="8" height="17" viewBox="0 0 8 17"><path d="M0.5 7.5 L4 3.5 L7.5 7.5 Z M0.5 10.8 L7.5 10.8 L4 14.8 Z" fill="#b4b4b4" stroke="#8c8c8c" stroke-width="0.8" stroke-linejoin="round"/></svg>
<div class="abs" style="left:87px;top:339px;width:140px;height:20px;background:#f3f3f3"></div>
<div class="abs lbl" style="left:87px;top:339px;color:#000">全平浮亏金额</div>
<div class="abs" style="left:172px;top:338px;width:38px;height:18px;border:1px solid #acacac;border-radius:2px;background:#fff"></div>
<div class="abs val" style="left:176px;top:343.5px;color:#000;width:33px;overflow:hidden">1000</div>
<svg class="abs" style="left:216px;top:338px" width="8" height="17" viewBox="0 0 8 17"><path d="M0.5 7.5 L4 3.5 L7.5 7.5 Z M0.5 10.8 L7.5 10.8 L4 14.8 Z" fill="#b4b4b4" stroke="#8c8c8c" stroke-width="0.8" stroke-linejoin="round"/></svg>
<div class="abs bt" style="left:267px;top:214px;box-sizing:border-box;width:70px;height:21px;background:#ff0000;color:#fff;border-radius:2px;text-align:center;padding-right:2px;padding-top:1px;line-height:20px">启动解多</div>
<div class="abs bt" style="left:367px;top:214px;box-sizing:border-box;width:70px;height:21px;background:#ff0000;color:#fff;border-radius:2px;text-align:center;padding-right:2px;padding-top:1px;line-height:20px">启动解空</div>
<div class="abs" style="left:297px;top:239px;width:140px;height:20px;background:#f3f3f3"></div>
<div class="abs lbl" style="left:297px;top:239px;color:#000">均线周期</div>
<div class="abs" style="left:382px;top:238px;width:38px;height:18px;border:1px solid #acacac;border-radius:2px;background:#fff"></div>
<div class="abs val" style="left:386px;top:243.5px;color:#000;width:33px;overflow:hidden">20</div>
<svg class="abs" style="left:426px;top:238px" width="8" height="17" viewBox="0 0 8 17"><path d="M0.5 7.5 L4 3.5 L7.5 7.5 Z M0.5 10.8 L7.5 10.8 L4 14.8 Z" fill="#b4b4b4" stroke="#8c8c8c" stroke-width="0.8" stroke-linejoin="round"/></svg>
<div class="abs" style="left:297px;top:264px;width:140px;height:20px;background:#f3f3f3"></div>
<div class="abs lbl" style="left:297px;top:264px;color:#000">最大加仓倍数</div>
<div class="abs" style="left:382px;top:263px;width:38px;height:18px;border:1px solid #acacac;border-radius:2px;background:#fff"></div>
<div class="abs val" style="left:386px;top:268.5px;color:#000;width:33px;overflow:hidden">5.0</div>
<svg class="abs" style="left:426px;top:263px" width="8" height="17" viewBox="0 0 8 17"><path d="M0.5 7.5 L4 3.5 L7.5 7.5 Z M0.5 10.8 L7.5 10.8 L4 14.8 Z" fill="#b4b4b4" stroke="#8c8c8c" stroke-width="0.8" stroke-linejoin="round"/></svg>
<div class="abs" style="left:297px;top:289px;width:140px;height:20px;background:#f3f3f3"></div>
<div class="abs lbl" style="left:297px;top:289px;color:#000">最大加仓次数</div>
<div class="abs" style="left:382px;top:288px;width:38px;height:18px;border:1px solid #acacac;border-radius:2px;background:#fff"></div>
<div class="abs val" style="left:386px;top:293.5px;color:#000;width:33px;overflow:hidden">10</div>
<svg class="abs" style="left:426px;top:288px" width="8" height="17" viewBox="0 0 8 17"><path d="M0.5 7.5 L4 3.5 L7.5 7.5 Z M0.5 10.8 L7.5 10.8 L4 14.8 Z" fill="#b4b4b4" stroke="#8c8c8c" stroke-width="0.8" stroke-linejoin="round"/></svg>
<div class="abs" style="left:297px;top:314px;width:140px;height:20px;background:#f3f3f3"></div>
<div class="abs lbl" style="left:297px;top:314px;color:#000">盈利出场系数</div>
<div class="abs" style="left:382px;top:313px;width:38px;height:18px;border:1px solid #acacac;border-radius:2px;background:#fff"></div>
<div class="abs val" style="left:386px;top:318.5px;color:#000;width:33px;overflow:hidden">100</div>
<svg class="abs" style="left:426px;top:313px" width="8" height="17" viewBox="0 0 8 17"><path d="M0.5 7.5 L4 3.5 L7.5 7.5 Z M0.5 10.8 L7.5 10.8 L4 14.8 Z" fill="#b4b4b4" stroke="#8c8c8c" stroke-width="0.8" stroke-linejoin="round"/></svg>
<div class="abs" style="left:297px;top:339px;width:140px;height:20px;background:#f3f3f3"></div>
<div class="abs lbl" style="left:297px;top:339px;color:#000">单笔最大单量</div>
<div class="abs" style="left:382px;top:338px;width:38px;height:18px;border:1px solid #acacac;border-radius:2px;background:#fff"></div>
<div class="abs val" style="left:386px;top:343.5px;color:#000;width:33px;overflow:hidden">1.00</div>
<svg class="abs" style="left:426px;top:338px" width="8" height="17" viewBox="0 0 8 17"><path d="M0.5 7.5 L4 3.5 L7.5 7.5 Z M0.5 10.8 L7.5 10.8 L4 14.8 Z" fill="#b4b4b4" stroke="#8c8c8c" stroke-width="0.8" stroke-linejoin="round"/></svg>
<div class="abs bt" style="left:87px;top:369px;box-sizing:border-box;width:60px;height:22px;background:#4b0082;color:#fff;border:1px solid #f08070;border-radius:2px;text-align:center;padding-right:2px;padding-top:1px;line-height:19px">平多</div>
<div class="abs bt" style="left:177px;top:369px;box-sizing:border-box;width:60px;height:22px;background:#008080;color:#fff;border:1px solid #f08070;border-radius:2px;text-align:center;padding-right:2px;padding-top:1px;line-height:19px">平空</div>
<div class="abs bt" style="left:267px;top:369px;box-sizing:border-box;width:60px;height:22px;background:#ff0000;color:#fff;border:1px solid #f08070;border-radius:2px;text-align:center;padding-right:2px;padding-top:1px;line-height:19px">多空全平</div>
<div class="abs bt" style="left:357px;top:369px;box-sizing:border-box;width:60px;height:22px;background:#ff4500;color:#fff;border:1px solid #f08070;border-radius:2px;text-align:center;padding-right:2px;padding-top:1px;line-height:19px">平盈利</div>
<div class="abs bt" style="left:87px;top:399px;box-sizing:border-box;width:60px;height:22px;background:#4b0082;color:#fff;border:1px solid #f08070;border-radius:2px;text-align:center;padding-right:2px;padding-top:1px;line-height:19px">删多挂单</div>
<div class="abs bt" style="left:177px;top:399px;box-sizing:border-box;width:60px;height:22px;background:#008080;color:#fff;border:1px solid #f08070;border-radius:2px;text-align:center;padding-right:2px;padding-top:1px;line-height:19px">删空挂单</div>
<div class="abs bt" style="left:267px;top:399px;box-sizing:border-box;width:60px;height:22px;background:#ff0000;color:#fff;border:1px solid #f08070;border-radius:2px;text-align:center;padding-right:2px;padding-top:1px;line-height:19px">挂单全删</div>
<div class="abs bt" style="left:357px;top:399px;box-sizing:border-box;width:60px;height:22px;background:#32cd32;color:#fff;border:1px solid #f08070;border-radius:2px;text-align:center;padding-right:2px;padding-top:1px;line-height:19px">平亏损</div>
<div class="abs" style="left:77px;top:432px;width:380px;height:1px;background:#8a8a8a"></div>
<div class="abs" style="left:77px;top:433px;width:379px;height:25px;background:#f2f2f2"></div>
<div class="abs" style="left:77px;top:458px;width:380px;height:1px;background:#c0d2ec"></div>
<div class="abs" style="left:77px;top:94px;width:1px;height:365px;background:#c0d2ec"></div>
<div class="abs lbl" style="left:88px;top:437px;color:#800080;font-size:13px;font-weight:500">解锁码<span style="margin-left:0px;font-weight:bold">:</span></div>
<div class="abs" style="left:137px;top:436px;width:98px;height:18px;border:1px solid #aaa;border-radius:2px;background:#fff"></div>
<div class="abs bt" style="left:247px;top:436px;box-sizing:border-box;width:70px;height:22px;background:#fff;color:#800080;border:1px solid #f08070;border-radius:2px;text-align:center;padding-right:2px;padding-top:1px;line-height:19px">视频教程</div></body></html>
